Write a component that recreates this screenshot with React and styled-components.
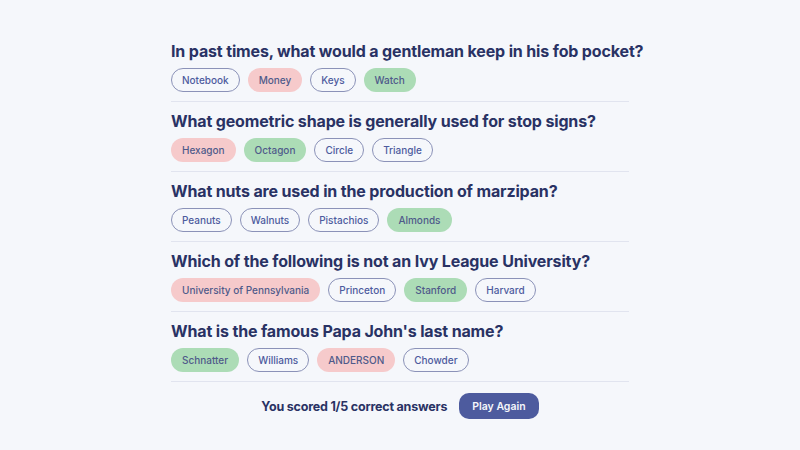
import React from "react";
import styled, { createGlobalStyle } from "styled-components";

const GlobalStyle = createGlobalStyle`
  html, body {
    margin: 0;
    padding: 0;
    background: #f5f7fb;
  }
  body {
    font-family: "Inter", "Noto Sans", sans-serif;
    color: #293264;
  }
`;

const questions = [
  {
    text: "In past times, what would a gentleman keep in his fob pocket?",
    answers: [
      { label: "Notebook" },
      { label: "Money", state: "wrong" },
      { label: "Keys" },
      { label: "Watch", state: "right" },
    ],
  },
  {
    text: "What geometric shape is generally used for stop signs?",
    answers: [
      { label: "Hexagon", state: "wrong" },
      { label: "Octagon", state: "right" },
      { label: "Circle" },
      { label: "Triangle" },
    ],
  },
  {
    text: "What nuts are used in the production of marzipan?",
    answers: [
      { label: "Peanuts" },
      { label: "Walnuts" },
      { label: "Pistachios" },
      { label: "Almonds", state: "right" },
    ],
  },
  {
    text: "Which of the following is not an Ivy League University?",
    answers: [
      { label: "University of Pennsylvania", state: "wrong" },
      { label: "Princeton" },
      { label: "Stanford", state: "right" },
      { label: "Harvard" },
    ],
  },
  {
    text: "What is the famous Papa John's last name?",
    answers: [
      { label: "Schnatter", state: "right" },
      { label: "Williams" },
      { label: "ANDERSON", state: "wrong" },
      { label: "Chowder" },
    ],
  },
];

const pillBg = {
  right: "#acdcb6",
  wrong: "#f6cacb",
};

const Page = styled.main`
  width: 458px;
  margin: 0 auto;
  padding-top: 41px;
`;

const Question = styled.section`
  padding-bottom: 9px;
  margin-bottom: 9px;
  border-bottom: 1px solid #e1e4ef;
`;

const Title = styled.h2`
  margin: 0 0 7px;
  font-size: 16px;
  line-height: 20px;
  font-weight: 700;
  letter-spacing: -0.15px;
  color: #293264;
  white-space: nowrap;
`;

const Answers = styled.div`
  display: flex;
  gap: 8px;
`;

const Pill = styled.button`
  height: 24px;
  padding: 0 10px;
  border-radius: 12px;
  font-family: inherit;
  font-size: 10px;
  font-weight: 500;
  color: ${(p) => (p.$state ? "#4f5a8a" : "#4d5b9e")};
  background: ${(p) => (p.$state ? pillBg[p.$state] : "transparent")};
  border: ${(p) => (p.$state ? "1px solid transparent" : "1px solid #8b92b8")};
  cursor: pointer;
`;

const Footer = styled.div`
  display: flex;
  justify-content: center;
  align-items: center;
  gap: 12px;
  padding-top: 2px;
`;

const Score = styled.span`
  font-size: 12.5px;
  font-weight: 700;
  letter-spacing: -0.2px;
  color: #293264;
`;

const PlayButton = styled.button`
  height: 26px;
  padding: 0 13px;
  border: none;
  border-radius: 10px;
  background: #4d5b9e;
  color: #f5f7fb;
  font-family: inherit;
  font-size: 10.5px;
  font-weight: 600;
  cursor: pointer;
`;

export default function App() {
  return (
    <>
      <GlobalStyle />
      <Page>
        {questions.map((q) => (
          <Question key={q.text}>
            <Title>{q.text}</Title>
            <Answers>
              {q.answers.map((a) => (
                <Pill key={a.label} $state={a.state}>
                  {a.label}
                </Pill>
              ))}
            </Answers>
          </Question>
        ))}
        <Footer>
          <Score>You scored 1/5 correct answers</Score>
          <PlayButton>Play Again</PlayButton>
        </Footer>
      </Page>
    </>
  );
}
